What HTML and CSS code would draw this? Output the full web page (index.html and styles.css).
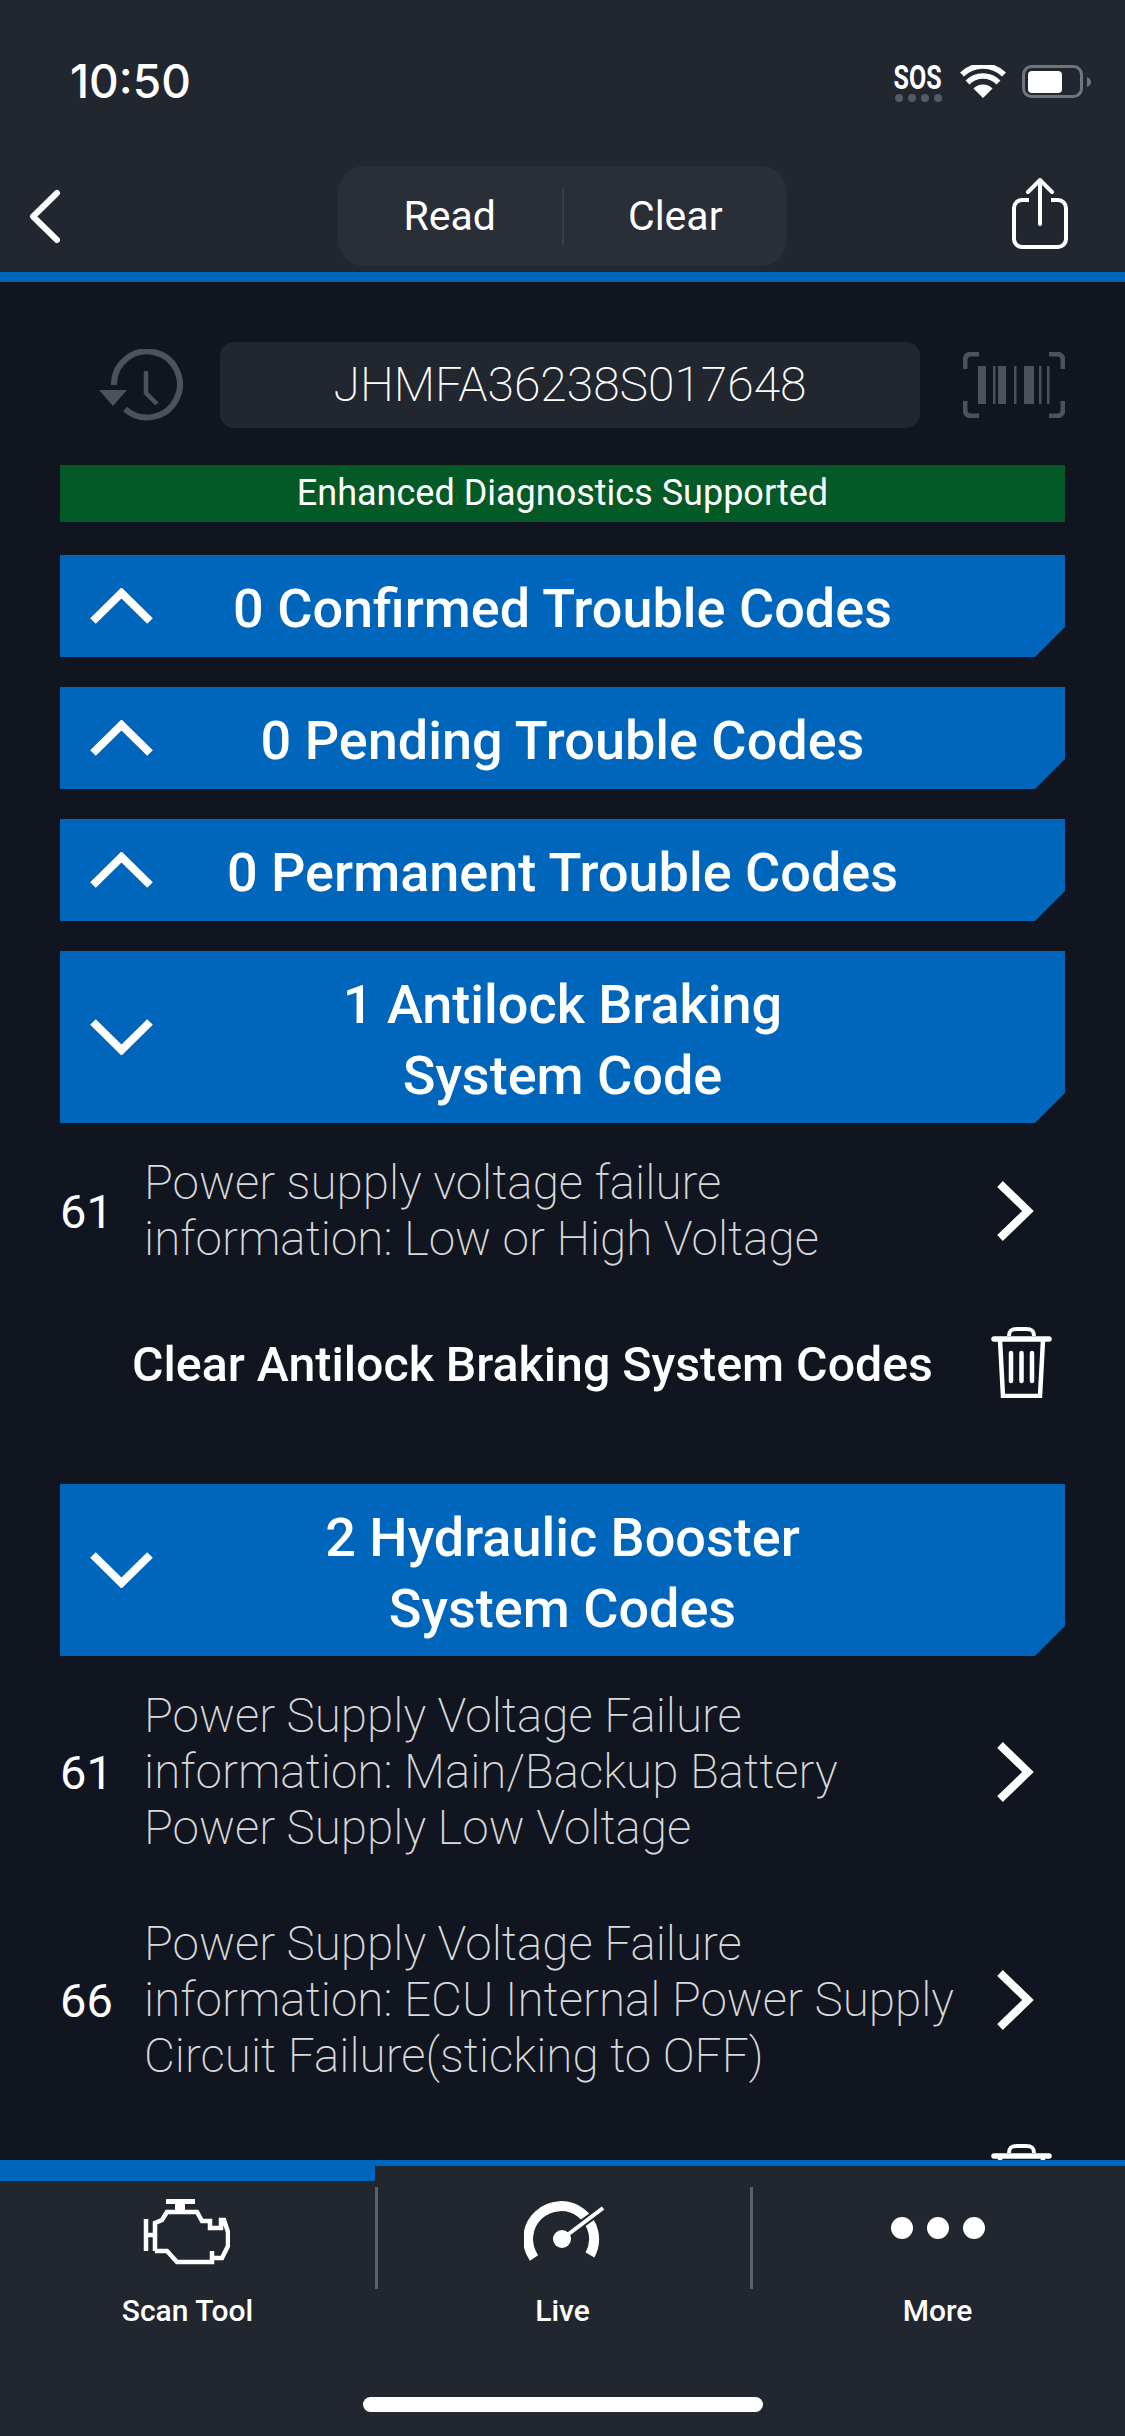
FILE: index.html
```html
<!DOCTYPE html>
<html>
	<head>
		<meta charset="utf-8">
		<title>Scan Tool</title>
		<link rel="stylesheet" href="styles.css">
	</head>
	<body>
		<div class="page">
			<header class="top">
				<div class="status">
					<span class="time">10:50</span>
					<div class="status-icons">
						<div class="sos">
							<span class="sos-text">SOS</span>
							<div class="sos-dots"><i></i><i></i><i></i><i></i></div>
						</div>
						<svg class="wifi" viewBox="0 0 46 33" width="46" height="33">
							<path d="M23 33 L13.5 23.5 A13.5 13.5 0 0 1 32.5 23.5 Z" fill="#fff"/>
							<path d="M7.5 17.5 A22 22 0 0 1 38.5 17.5" fill="none" stroke="#fff" stroke-width="5.5"/>
							<path d="M2 9.5 A30 30 0 0 1 44 9.5" fill="none" stroke="#fff" stroke-width="5.5"/>
						</svg>
						<svg class="battery" viewBox="0 0 69 33" width="69" height="33">
							<rect x="1.5" y="1.5" width="58" height="30" rx="8" fill="none" stroke="#70747b" stroke-width="3"/>
							<rect x="6" y="6" width="34" height="22" rx="4" fill="#fff"/>
							<path d="M65 12 C68 13 69 15 69 17 C69 19 68 21 65 22 Z" fill="#70747b"/>
						</svg>
					</div>
				</div>
				<nav class="nav">
					<svg class="back" viewBox="0 0 32 55" width="32" height="55">
						<path d="M28 4 L4 27.500 L28 51" fill="none" stroke="#fff" stroke-width="6" stroke-linecap="round" stroke-linejoin="round"/>
					</svg>
					<div class="segment">
						<span class="segment-item">Read</span>
						<span class="segment-line"></span>
						<span class="segment-item">Clear</span>
					</div>
					<svg class="share" viewBox="0 0 56 71" width="56" height="71">
						<path d="M17 22 H10 A8 8 0 0 0 2 30 V61 A8 8 0 0 0 10 69 H46 A8 8 0 0 0 54 61 V30 A8 8 0 0 0 46 22 H39" fill="none" stroke="#fff" stroke-width="4"/>
						<path d="M28 46 V3 M16 14 L28 2 L40 14" fill="none" stroke="#fff" stroke-width="4" stroke-linecap="round"/>
					</svg>
				</nav>
			</header>

			<main class="content">
				<div class="vin-row">
					<svg class="history" viewBox="0 0 84 72" width="84" height="72">
						<path d="M15 36 A33 33 0 1 1 26 60" fill="none" stroke="#4d5159" stroke-width="6"/>
						<path d="M0 41 H28 L14 57 Z" fill="#4d5159"/>
						<path d="M47 22 V44 L58 55" fill="none" stroke="#4d5159" stroke-width="4.500"/>
					</svg>
					<div class="vin">JHMFA36238S017648</div>
					<svg class="barcode" viewBox="0 0 102 66" width="102" height="66">
						<path d="M16 2 H8 A6 6 0 0 0 2 8 V17 M86 2 H94 A6 6 0 0 1 100 8 V17 M2 49 V58 A6 6 0 0 0 8 64 H16 M100 49 V58 A6 6 0 0 1 94 64 H86" fill="none" stroke="#4d5159" stroke-width="5"/>
						<path d="M15 14 h8 v38 h-8 Z M30 14 h2.500 v38 h-2.500 Z M35 14 h8 v38 h-8 Z M51 14 h2.500 v38 h-2.500 Z M61 14 h10 v38 h-10 Z M76 14 h2.500 v38 h-2.500 Z M84 14 h2.500 v38 h-2.500 Z" fill="#4d5159"/>
					</svg>
				</div>

				<div class="enhanced">Enhanced Diagnostics Supported</div>

				<div class="bar">
					<svg class="chev" viewBox="0 0 63 36" width="63" height="36"><path d="M3 33 L31.500 5 L60 33" fill="none" stroke="#fff" stroke-width="8"/></svg>
					<div class="bar-title">0 Confirmed Trouble Codes</div>
				</div>
				<div class="bar">
					<svg class="chev" viewBox="0 0 63 36" width="63" height="36"><path d="M3 33 L31.500 5 L60 33" fill="none" stroke="#fff" stroke-width="8"/></svg>
					<div class="bar-title">0 Pending Trouble Codes</div>
				</div>
				<div class="bar">
					<svg class="chev" viewBox="0 0 63 36" width="63" height="36"><path d="M3 33 L31.500 5 L60 33" fill="none" stroke="#fff" stroke-width="8"/></svg>
					<div class="bar-title">0 Permanent Trouble Codes</div>
				</div>

				<div class="bar bar-tall">
					<svg class="chev" viewBox="0 0 63 36" width="63" height="36"><path d="M3 3 L31.500 31 L60 3" fill="none" stroke="#fff" stroke-width="8"/></svg>
					<div class="bar-title">1 Antilock Braking<br>System Code</div>
				</div>
				<div class="codes">
					<div class="code">
						<span class="code-num">61</span>
						<div class="code-text">Power supply voltage failure<br>information: Low or High Voltage</div>
						<svg class="more-arrow" viewBox="0 0 38 60" width="38" height="60"><path d="M4 3 L32 30 L4 57" fill="none" stroke="#fff" stroke-width="8"/></svg>
					</div>
					<div class="clear-row">
						<span class="clear-text">Clear Antilock Braking System Codes</span>
						<svg class="trash" viewBox="0 0 61 71" width="61" height="71">
							<path d="M18 9 C18 3 21 2 26 2 H35 C40 2 43 3 43 9" fill="none" stroke="#fff" stroke-width="4"/>
							<path d="M3 12 H58" fill="none" stroke="#fff" stroke-width="5.500" stroke-linecap="round"/>
							<path d="M9 13 L12 69 H49 L52 13" fill="none" stroke="#fff" stroke-width="4.500"/>
							<path d="M20 26 V54 M30.500 26 V54 M41 26 V54" fill="none" stroke="#fff" stroke-width="4.500" stroke-linecap="round"/>
						</svg>
					</div>
				</div>

				<div class="bar bar-tall">
					<svg class="chev" viewBox="0 0 63 36" width="63" height="36"><path d="M3 3 L31.500 31 L60 3" fill="none" stroke="#fff" stroke-width="8"/></svg>
					<div class="bar-title">2 Hydraulic Booster<br>System Codes</div>
				</div>
				<div class="codes">
					<div class="code">
						<span class="code-num">61</span>
						<div class="code-text">Power Supply Voltage Failure<br>information: Main/Backup Battery<br>Power Supply Low Voltage</div>
						<svg class="more-arrow" viewBox="0 0 38 60" width="38" height="60"><path d="M4 3 L32 30 L4 57" fill="none" stroke="#fff" stroke-width="8"/></svg>
					</div>
					<div class="code">
						<span class="code-num">66</span>
						<div class="code-text">Power Supply Voltage Failure<br>information: ECU Internal Power Supply<br>Circuit Failure(sticking to OFF)</div>
						<svg class="more-arrow" viewBox="0 0 38 60" width="38" height="60"><path d="M4 3 L32 30 L4 57" fill="none" stroke="#fff" stroke-width="8"/></svg>
					</div>
					<div class="clear-row clear-row-end">
						<svg class="trash" viewBox="0 0 61 71" width="61" height="71">
							<path d="M18 9 C18 3 21 2 26 2 H35 C40 2 43 3 43 9" fill="none" stroke="#fff" stroke-width="4"/>
							<path d="M3 12 H58" fill="none" stroke="#fff" stroke-width="5.500" stroke-linecap="round"/>
							<path d="M9 13 L12 69 H49 L52 13" fill="none" stroke="#fff" stroke-width="4.500"/>
						</svg>
					</div>
				</div>
			</main>

			<footer class="bottom">
				<div class="tabs">
					<div class="tab tab-on">
						<div class="tab-icon">
							<svg class="engine" viewBox="0 0 87 66" width="87" height="66">
								<path d="M23 2.500 H52" fill="none" stroke="#fff" stroke-width="5"/>
								<path d="M37 2 V13" fill="none" stroke="#fff" stroke-width="10"/>
								<path d="M12 52 V24 L19 21 L24 13 H54 L59 22 H67 V29 H78 V21 H81 L85 33 V47 L79 59 H69 V52 M69 52 V63 H34 L24 52 H12" fill="none" stroke="#fff" stroke-width="4.500"/>
								<path d="M3 20 V52 M3 36 H12" fill="none" stroke="#fff" stroke-width="4.500"/>
							</svg>
						</div>
						<span class="tab-label">Scan Tool</span>
					</div>
					<div class="tab">
						<div class="tab-icon tab-icon-line">
							<svg viewBox="0 0 80 66" width="80" height="66">
								<path d="M10 59 A33 33 0 1 1 66 56" fill="none" stroke="#fff" stroke-width="10"/>
								<path d="M52 29 L70 16" fill="none" stroke="#21262f" stroke-width="8"/>
								<path d="M38 40 L79 9" fill="none" stroke="#fff" stroke-width="4"/>
								<circle cx="38" cy="40" r="9" fill="#fff"/>
							</svg>
						</div>
						<span class="tab-label">Live</span>
					</div>
					<div class="tab">
						<div class="tab-icon tab-icon-line">
							<div class="dots"><i></i><i></i><i></i></div>
						</div>
						<span class="tab-label">More</span>
					</div>
				</div>
				<div class="home"></div>
			</footer>
		</div>
	</body>
</html>
```

FILE: styles.css
```css
*
{
	box-sizing:border-box;
}
html, body
{
	margin:0;
	padding:0;
	background:#111520;
}
body
{
	font-family:Roboto, "Liberation Sans", sans-serif;
	color:#fff;
}
.page
{
	width:1125px;
	height:2436px;
	display:flex;
	flex-direction:column;
	overflow:hidden;
}

/* top */
.top
{
	height:282px;
	flex:none;
	padding-top:65px;
	background:#21262f;
	border-bottom:10px solid #0066bb;
}
.status
{
	height:33px;
	padding:0 34px 0 70px;
	display:flex;
	justify-content:space-between;
	align-items:center;
}
.time
{
	font-size:46px;
	font-weight:500;
	line-height:33px;
	font-family:Inter, Roboto, sans-serif;
}
.status-icons
{
	display:flex;
	align-items:center;
	gap:16px;
}
.sos
{
	width:48px;
	margin-right:2px;
	display:flex;
	flex-direction:column;
	align-items:center;
	margin-top:4px;
}
.sos-text
{
	font-size:33px;
	font-weight:700;
	line-height:26px;
	transform:scaleX(.76);
}
.sos-dots
{
	display:flex;
	gap:5px;
	margin-top:3px;
}
.sos-dots i
{
	width:8px;
	height:8px;
	border-radius:50%;
	background:#565a62;
}
.nav
{
	height:100px;
	padding:0 57px 0 29px;
	margin-top:68px;
	display:grid;
	grid-template-columns:309px 449px 1fr;
	align-items:center;
}
.share
{
	justify-self:end;
	margin-top:-5px;
}
.segment
{
	height:100px;
	display:grid;
	grid-template-columns:1fr 2px 1fr;
	align-items:center;
	background:#2a2e37;
	border-radius:26px;
	font-size:41px;
}
.segment-item
{
	text-align:center;
}
.segment-line
{
	height:57px;
	background:#3a3e47;
}

/* content */
.content
{
	flex:1;
	min-height:0;
	overflow:hidden;
	padding:60px 60px 0;
}
.vin-row
{
	height:86px;
	display:flex;
	align-items:center;
	padding-left:39px;
	margin-bottom:37px;
}
.vin
{
	width:700px;
	height:86px;
	margin:0 43px 0 37px;
	line-height:86px;
	text-align:center;
	background:#21262f;
	border-radius:14px;
	font-size:48px;
	font-weight:200;
}
.enhanced
{
	height:57px;
	line-height:56px;
	text-align:center;
	background:#045a26;
	font-size:36px;
	margin-bottom:33px;
}
.bar
{
	min-height:102px;
	padding:5px 0;
	display:grid;
	grid-template-columns:110px 1fr 110px;
	align-items:center;
	background:#0066bb;
	clip-path:polygon(0 0, 100% 0, 100% calc(100% - 30px), calc(100% - 30px) 100%, 0 100%);
	margin-bottom:30px;
}
.bar-tall
{
	min-height:172px;
	margin-bottom:0;
}
.chev
{
	justify-self:end;
	margin-right:17px;
}
.bar-title
{
	font-size:54px;
	font-weight:500;
	line-height:71px;
	text-align:center;
	padding-top:5px;
}
.codes
{
	padding-top:32px;
}
.code
{
	display:flex;
	align-items:center;
	margin-bottom:60px;
}
.code-num
{
	width:84px;
	font-size:47px;
	flex:none;
}
.code-text
{
	flex:1;
	font-size:47.6px;
	font-weight:200;
	line-height:56px;
	color:#d8d9db;
}
.more-arrow
{
	flex:none;
	margin-right:31px;
}
.clear-row
{
	height:71px;
	margin-bottom:86px;
	padding:0 13px 0 72px;
	display:flex;
	justify-content:space-between;
	align-items:center;
}
.clear-row-end
{
	justify-content:flex-end;
}
.clear-text
{
	font-size:48.3px;
	font-weight:500;
	margin-top:3px;
}

/* bottom */
.bottom
{
	height:276px;
	flex:none;
	background:#21262f;
	border-top:6px solid #0066bb;
}
.tabs
{
	display:grid;
	grid-template-columns:375px 375px 375px;
}
.tab
{
	padding-top:21px;
	display:flex;
	flex-direction:column;
	align-items:center;
}
.tab-on
{
	padding-top:6px;
	border-top:15px solid #0066bb;
}
.tab-icon
{
	width:100%;
	height:102px;
	padding-top:12px;
	display:flex;
	justify-content:center;
}
.tab-icon-line
{
	border-left:3px solid #5c6066;
}
.engine
{
	margin-right:2px;
}
.tab-label
{
	font-size:30px;
	font-weight:500;
	line-height:34px;
	margin-top:5px;
}
.dots
{
	display:flex;
	gap:14px;
	margin:18px 3px 0 0;
}
.dots i
{
	width:22px;
	height:22px;
	border-radius:50%;
	background:#fff;
}
.home
{
	width:400px;
	height:15px;
	margin:69px auto 0;
	border-radius:8px;
	background:#fff;
}
```
